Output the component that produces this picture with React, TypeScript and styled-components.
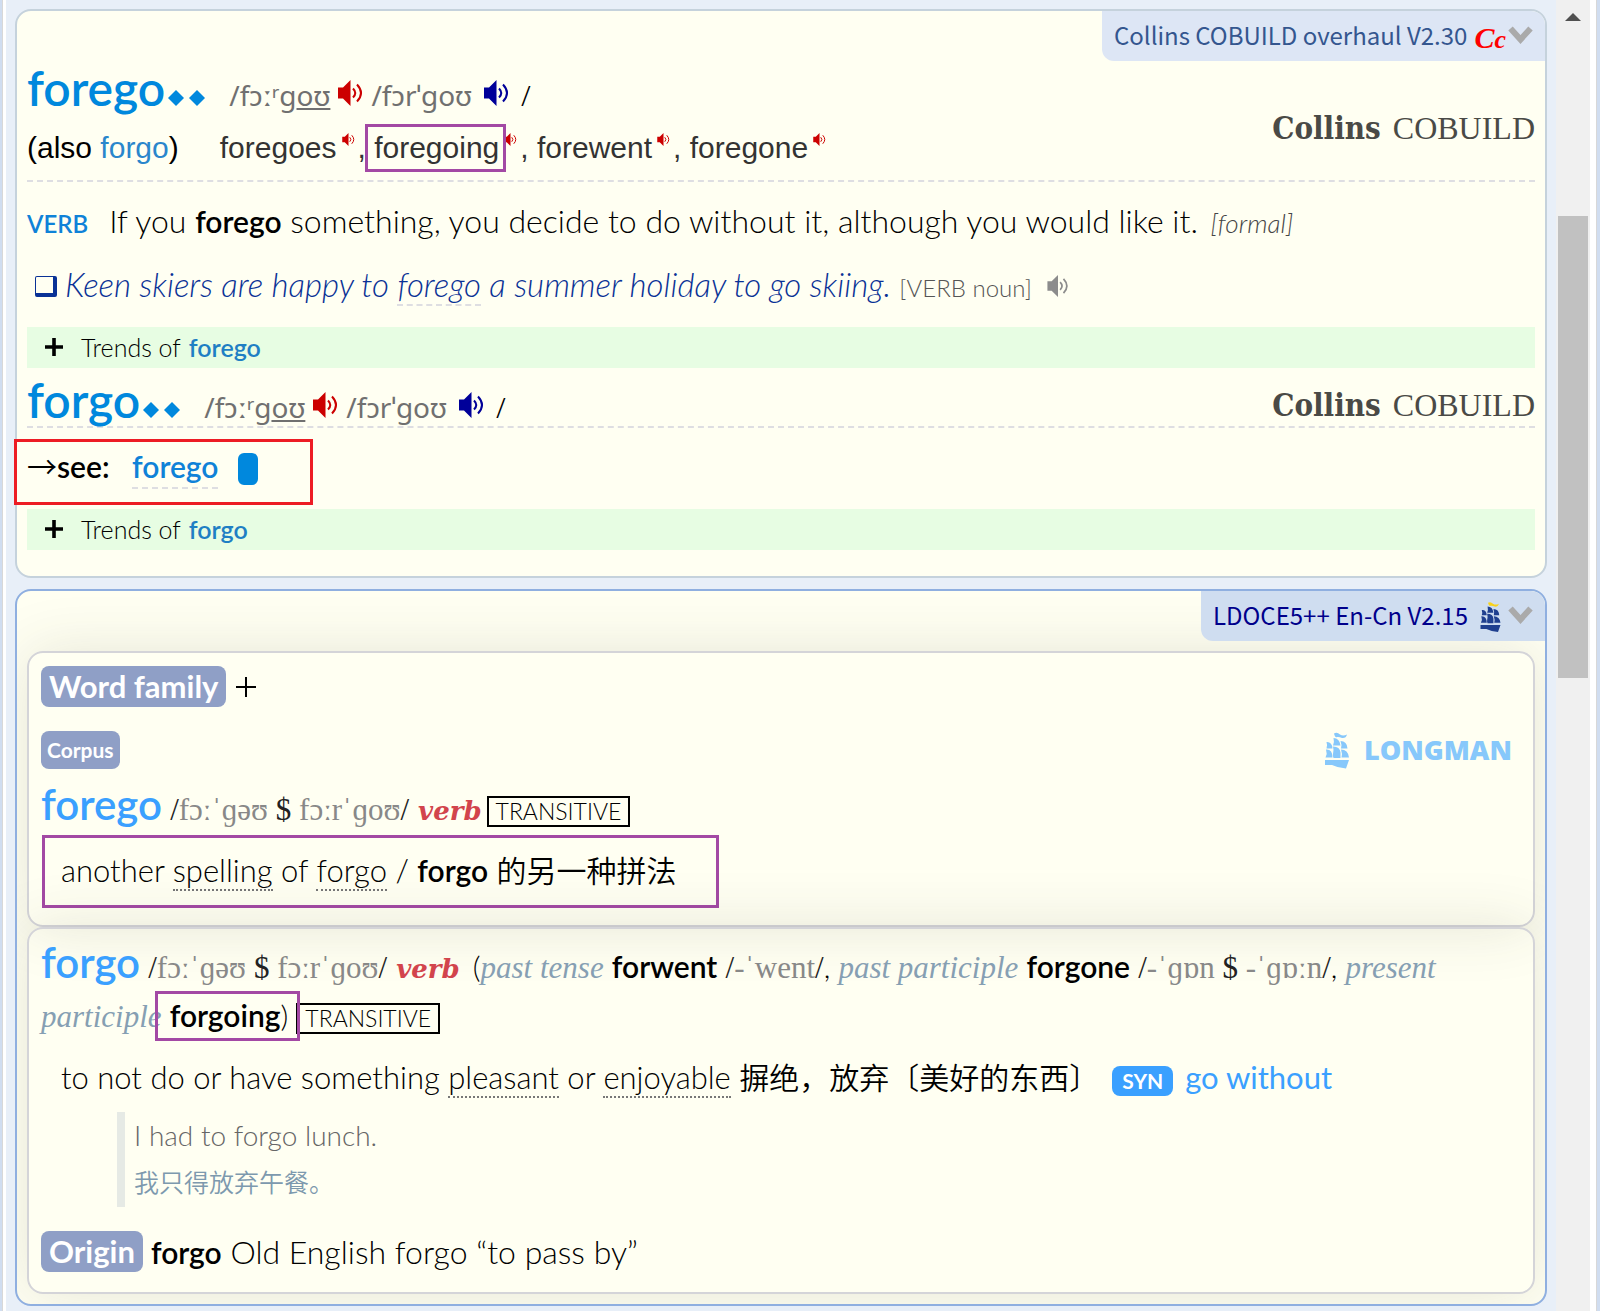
import React from "react";
import styled, { createGlobalStyle } from "styled-components";

const sans = `Lato, "Noto Sans CJK SC", sans-serif`;
const ipa = `"Noto Sans", "DejaVu Sans", sans-serif`;
const serif = `"Liberation Serif", "DejaVu Serif", serif`;
const cjk = `"Noto Sans CJK SC", sans-serif`;

const Global = createGlobalStyle`
  *, *::before, *::after { box-sizing: border-box; }
  body { margin: 0; background: #e8eff8; color: #000; font-family: ${sans}; font-size: 32px; font-weight: 300; }
  button { border: 0; padding: 0; margin: 0; background: none; font: inherit; color: inherit; cursor: pointer; }
  a { color: inherit; text-decoration: none; }
`;

const Page = styled.div`
  display: flex;
  min-height: 100vh;
`;
const LeftRail = styled.div`
  width: 6px;
  background: #fff;
  border-left: 2px solid #d0ddf0;
  box-shadow: inset 1px 0 #d8d8d8;
`;
const Main = styled.main`
  flex: 1;
  min-width: 0;
  display: flex;
  flex-direction: column;
  gap: 11px;
  padding: 9px 9px 5px;
`;
const ScrollTrack = styled.div`
  width: 34px;
  background: #f0f0f0;
  display: flex;
  flex-direction: column;
  align-items: center;
`;
const ScrollUp = styled.button`
  width: 34px;
  height: 34px;
  display: grid;
  place-items: center;
`;
const Thumb = styled.div`
  width: 30px;
  height: 462px;
  margin-top: 182px;
  background: #c1c1c1;
`;
const RightRail = styled.div`
  width: 10px;
  background: #fff;
  border-right: 3px solid #d0ddf0;
  box-shadow: inset -1px 0 #d8d8d8;
`;

const Card = styled.section<{ $line: string; $clip?: boolean }>`
  border: 2px solid ${(p) => p.$line};
  border-radius: 16px;
  background: #fffff2;
  padding: 0 10px 10px;
  overflow: ${(p) => (p.$clip ? "hidden" : "visible")};
`;
const Tab = styled.button<{ $bg: string; $ink: string }>`
  position: relative;
  z-index: 1;
  display: flex;
  align-items: center;
  height: 50px;
  margin: 0 -10px 0 auto;
  padding: 0 12px 3px;
  border-radius: 0 14px 0 12px;
  background: ${(p) => p.$bg};
  color: ${(p) => p.$ink};
  font-family: ${cjk};
  font-size: 24px;
  font-weight: 400;
`;
const CcMark = styled.span`
  margin-left: 7px;
  padding-top: 6px;
  color: #f00;
  font: italic bold 30px/1 ${serif};
  small { font-size: 26px; }
`;
const TabIcon = styled.span`
  display: flex;
  margin-left: 12px;
  padding-top: 4px;
`;
const ChevronBox = styled.span<{ $gap: number }>`
  display: flex;
  margin-left: ${(p) => p.$gap}px;
`;

const HeadBlock = styled.header`
  display: flex;
  justify-content: space-between;
  align-items: center;
  border-bottom: 2px dashed #dedee2;
`;
const HeadLine = styled.div<{ $low: boolean }>`
  height: 58px;
  line-height: ${(p) => (p.$low ? 76 : 65)}px;
  white-space: nowrap;
  & > * { line-height: 1; }
`;
const Forms = styled.div`
  height: 61px;
  line-height: 58px;
  font-family: "Liberation Sans", Arial, sans-serif;
  font-size: 30px;
  font-weight: 400;
  color: #333;
  white-space: nowrap;
`;
const Also = styled.span`
  margin-right: 41px;
  color: #000;
  a { color: #2a86cc; }
`;
const Word = styled.h2<{ $ink: string; $size: number }>`
  display: inline;
  margin: 0;
  font-size: ${(p) => p.$size}px;
  font-weight: 600;
  color: ${(p) => p.$ink};
`;
const Stars = styled.span`
  display: inline-flex;
  gap: 5px;
  margin: 0 24px 0 3px;
`;
const Ipa = styled.span`
  font-family: ${ipa};
  font-size: 28px;
  font-weight: 400;
  color: #707070;
`;
const Slash = styled.span`
  font-size: 28px;
  font-family: ${ipa};
`;
const Sound = styled.button<{ $ink: string; $gap: number }>`
  display: inline-block;
  margin: 0 ${(p) => p.$gap}px;
  color: ${(p) => p.$ink};
  svg { display: block; }
`;
const FormSound = styled(Sound)`
  margin: 0 3px 0 5px;
  vertical-align: 12px;
`;
const CollinsLogo = styled.div`
  display: flex;
  align-items: baseline;
  gap: 12px;
  padding-top: 15px;
  color: #4a4a46;
  font: 32px/40px ${serif};
  b { font: bold 31px/40px "DejaVu Serif Condensed", "DejaVu Serif", serif; }
`;

const Marked = styled.span<{ $inset: string }>`
  position: relative;
  &::after {
    content: "";
    position: absolute;
    inset: ${(p) => p.$inset};
    border: 3px solid #a349a4;
    pointer-events: none;
  }
`;

const Line = styled.p<{ $top: number }>`
  margin: ${(p) => p.$top}px 0 0;
  height: 40px;
  line-height: 37px;
  white-space: nowrap;
  & > * { line-height: 1; }
`;
const Pos = styled.span`
  margin-right: 21px;
  font-size: 24px;
  font-weight: 600;
  color: #0f82d8;
`;
const Register = styled.i`
  margin-left: 4px;
  font-size: 26px;
  color: #444;
`;
const Example = styled(Line)`
  padding-left: 8px;
  font-size: 33px;
  font-style: italic;
  color: #0a3296;
  a { padding-bottom: 0; }
`;
const Box = styled.span`
  display: inline-block;
  width: 22px;
  height: 21px;
  margin-right: 8px;
  border: 2px solid #0a3296;
  border-width: 1px 4px 4px 1px;
  border-radius: 2px;
`;
const DashLink = styled.a`
  padding-bottom: 3px;
  border-bottom: 2px dashed #dedee2;
`;
const Grammar = styled.span`
  margin: 0 15px 0 0;
  font-size: 24px;
  font-style: normal;
  color: #555;
`;
const Trends = styled.button`
  display: flex;
  align-items: center;
  width: 100%;
  height: 41px;
  margin-top: 21px;
  padding: 0 0 2px 18px;
  background: #e7fde3;
  font-size: 25px;
  text-align: left;
  svg { margin-right: 18px; }
  b { margin-left: 8px; color: #1f7fc4; font-weight: 600; }
`;
const See = styled(Line)`
  position: relative;
  font-size: 30px;
  font-weight: 600;
  &::after {
    content: "";
    position: absolute;
    left: -13px;
    top: -9px;
    width: 299px;
    height: 66px;
    border: 3px solid #ed1c24;
    pointer-events: none;
  }
  a { margin-left: 15px; color: #0f82d8; }
`;
const Arrow = styled.span`
  font-family: ${cjk};
  font-weight: 350;
`;
const Chip = styled.span`
  display: inline-block;
  width: 20px;
  height: 32px;
  margin-left: 20px;
  border-radius: 6px;
  background: #0088dd;
  vertical-align: -7px;
`;
const Pad = styled.div`
  height: 16px;
`;

const Entry = styled.article`
  border: 2px solid #d4d4d8;
  border-radius: 16px;
  padding: 9px 12px 17px 12px;
  box-shadow: 0 0 60px rgba(60, 60, 50, 0.13);
  &:last-child { padding-bottom: 20px; }
`;
const Entries = styled.div`
  display: grid;
  margin-top: 10px;
`;
const Row = styled.div<{ $top: number }>`
  display: flex;
  align-items: center;
  margin-top: ${(p) => p.$top}px;
`;
const Badge = styled.span<{ $small?: boolean }>`
  height: ${(p) => (p.$small ? 38 : 41)}px;
  padding: 0 ${(p) => (p.$small ? 6 : 8)}px;
  border-radius: 8px;
  background: #8f9fc6;
  color: #fff;
  font-size: ${(p) => (p.$small ? 21 : 31)}px;
  line-height: ${(p) => (p.$small ? 37 : 40)}px;
  font-weight: 700;
`;
const Expand = styled.button`
  display: flex;
  margin-left: 10px;
`;
const Longman = styled.div`
  display: flex;
  align-items: center;
  gap: 15px;
  margin: 0 9px 0 auto;
  color: #87c8fb;
  font: 800 27px/38px "Open Sans", sans-serif;
`;
const LHead = styled.div<{ $top: number }>`
  margin-top: ${(p) => p.$top}px;
  font-size: 30px;
  line-height: 49px;
  & > * { line-height: 1; }
`;
const Pron = styled.span`
  font-family: ${serif};
  font-size: 31px;
  color: #888;
  b { font-weight: 400; color: #222; }
`;
const Verb = styled.i`
  margin: 0 5px 0 9px;
  font-family: "DejaVu Serif", ${serif};
  font-size: 26px;
  font-weight: 700;
  color: #d2444c;
`;
const Label = styled.i`
  font-family: ${serif};
  font-size: 31px;
  color: #869fb3;
`;
const Strong = styled.b`
  font-size: 30px;
  font-weight: 600;
`;
const Gram = styled.span`
  display: inline-block;
  padding: 2px 7px;
  border: 2px solid #000;
  font-size: 23px;
`;
const BoxedDef = styled.div`
  width: fit-content;
  height: 73px;
  margin: 2px 0 0 1px;
  padding: 0 40px 0 16px;
  border: 3px solid #a349a4;
  font-size: 31px;
  line-height: 64px;
  & > * { line-height: 1; }
`;
const Def = styled(Line)`
  padding-left: 20px;
  font-size: 31px;
`;
const Dotted = styled.a`
  border-bottom: 2px dotted #777;
`;
const Zh = styled.span`
  font-family: ${cjk};
  font-size: 30px;
  font-weight: 350;
`;
const Syn = styled.span`
  display: inline-block;
  height: 30px;
  margin: 0 12px 0 13px;
  padding: 0 10px;
  border-radius: 8px;
  background: #3aa0ff;
  color: #fff;
  font-size: 21px;
  font-weight: 700;
  && { line-height: 29px; }
`;
const SynLink = styled.a`
  color: #3aa0ff;
  font-weight: 400;
`;
const Quote = styled.blockquote`
  margin: 13px 0 0 76px;
  padding-left: 9px;
  border-left: 8px solid #e6eae5;
  font-size: 28px;
  line-height: 47px;
  color: #666;
  height: 95px;
  div + div { font: 350 25px/44px ${cjk}; color: #7d99ae; }
`;
const OriginText = styled.span`
  margin-left: 8px;
  line-height: 38px;
`;

const Speaker = ({ w, h }: { w: number; h: number }) => (
  <svg width={w} height={h} viewBox="0 0 25 26" fill="none" aria-hidden="true">
    <path d="M0 7.500h5L12.500 0v26L5 18.500H0z" fill="currentColor" />
    <path d="M15 8.500q4.500 4.500 0 9M19 4.500q8 8.500 0 17" stroke="currentColor" strokeWidth="2" />
  </svg>
);
const Chevron = () => (
  <svg width="25" height="18" viewBox="0 0 25 18" aria-hidden="true">
    <path d="M2.500 2.500 12.500 13.500 22.500 2.500" fill="none" stroke="#aaa" strokeWidth="6" />
  </svg>
);
const Diamond = () => (
  <svg width="16" height="16" viewBox="0 0 16 16" aria-hidden="true">
    <path d="M8 0l8 8-8 8-8-8z" fill="#0088dd" />
  </svg>
);
const Ship = ({ w, h, flag, hull }: { w: number; h: number; flag: string; hull: string }) => (
  <svg width={w} height={h} viewBox="0 0 24 36" aria-hidden="true">
    <path d="M9 1q3-2 6 1 3 2 7 0-1 4-5 3.500-3-1.500-5-1-2 1-3-3.500z" fill={flag} />
    <g fill={hull}>
      <path d="M8.500 5.500q6 0 7 7.500H8q1.500-4 .5-7.500z" />
      <path d="M1.500 9.500q5.500-.5 6 6.500h-6q1.200-3 0-6.500zM15.500 8.500q6.500 0 7 7.500h-6.500q1-4-.5-7.500z" />
      <path d="M8 14q7 0 7.500 6v5.500H8.500q-1-2-.5-4 1-4 0-7.500z" />
      <path d="M1 17q6.500-.5 6.500 8H.5q2-4 .5-8zM16 17q7 0 8 8h-7.500q1-4-.5-8z" />
      <path d="M0 27.500h24l-3 8.500q-8-.5-14-3.500H0z" />
    </g>
  </svg>
);
const Plus = ({ size, weight }: { size: number; weight: number }) => (
  <svg width={size} height={size} viewBox="0 0 20 20" aria-hidden="true">
    <path d="M10 0v20M0 10h20" stroke="#000" strokeWidth={weight} />
  </svg>
);

const CobuildHead = ({ word, forms }: { word: string; forms?: React.ReactNode }) => (
  <HeadBlock>
    <div>
      <HeadLine $low={!forms}>
        <Word $ink="#0088dd" $size={48}>{word}</Word>
        <Stars><Diamond /><Diamond /></Stars>
        <Ipa>/fɔːʳg<u>oʊ</u></Ipa>
        <Sound $ink="#cc0000" $gap={8} aria-label="British pronunciation"><Speaker w={25} h={26} /></Sound>
        <Ipa>/fɔrˈgoʊ</Ipa>
        <Sound $ink="#000099" $gap={12} aria-label="American pronunciation"><Speaker w={25} h={26} /></Sound>
        <Slash>/</Slash>
      </HeadLine>
      {forms}
    </div>
    <CollinsLogo><b>Collins</b>COBUILD</CollinsLogo>
  </HeadBlock>
);
const SmallSound = () => (
  <FormSound $ink="#cc0000" $gap={0} aria-label="Play"><Speaker w={13} h={13} /></FormSound>
);
const Pronunciation = () => (
  <Pron><b>/</b>fɔːˈɡəʊ <b>$</b> fɔːrˈɡoʊ<b>/</b></Pron>
);

export default function App() {
  return (
    <>
      <Global />
      <Page>
        <LeftRail />
        <Main>
          <Card $line="#c5d2dc">
            <Tab $bg="#dde6f5" $ink="#34568f">
              Collins COBUILD overhaul V2.30
              <CcMark>C<small>c</small></CcMark>
              <ChevronBox $gap={2}><Chevron /></ChevronBox>
            </Tab>
            <CobuildHead
              word="forego"
              forms={
                <Forms>
                  <Also>(also <a href="#forgo">forgo</a>)</Also>
                  foregoes<SmallSound />, <Marked $inset="-7px -7px -8px -9px">foregoing</Marked><SmallSound />, forewent
                  <SmallSound />, foregone<SmallSound />
                </Forms>
              }
            />
            <Line $top={20}>
              <Pos>VERB</Pos>If you <Strong>forego</Strong> something, you decide to do without it, although you would like it.{" "}
              <Register>[formal]</Register>
            </Line>
            <Example $top={24}>
              <Box />Keen skiers are happy to <DashLink href="#forego">forego</DashLink> a summer holiday to go skiing.{" "}
              <Grammar>[VERB noun]</Grammar>
              <Sound $ink="#8c8c8c" $gap={0} aria-label="Play example"><Speaker w={22} h={22} /></Sound>
            </Example>
            <Trends><Plus size={18} weight={4} />Trends of <b>forego</b></Trends>
            <CobuildHead word="forgo" />
            <See $top={20}>
              <Arrow>→</Arrow>see: <DashLink href="#forego">forego</DashLink><Chip />
            </See>
            <Trends><Plus size={18} weight={4} />Trends of <b>forgo</b></Trends>
            <Pad />
          </Card>

          <Card $line="#8fafe0" $clip>
            <Tab $bg="#cfddf0" $ink="#00008b">
              LDOCE5++ En-Cn V2.15
              <TabIcon><Ship w={21} h={30} flag="#f8d21c" hull="#1f3f8f" /></TabIcon>
              <ChevronBox $gap={7}><Chevron /></ChevronBox>
            </Tab>
            <Entries>
              <Entry>
                <Row $top={4}>
                  <Badge>Word family</Badge>
                  <Expand aria-label="Expand word family"><Plus size={20} weight={2} /></Expand>
                </Row>
                <Row $top={24}>
                  <Badge $small>Corpus</Badge>
                  <Longman><Ship w={24} h={37} flag="#87c8fb" hull="#87c8fb" />LONGMAN</Longman>
                </Row>
                <LHead $top={14}>
                  <Word $ink="#3aa0ff" $size={42}>forego</Word> <Pronunciation /><Verb>verb</Verb><Gram>TRANSITIVE</Gram>
                </LHead>
                <BoxedDef>
                  another <Dotted href="#spelling">spelling</Dotted> of <Dotted href="#forgo">forgo</Dotted> / <Strong>forgo</Strong>{" "}
                  <Zh>的另一种拼法</Zh>
                </BoxedDef>
              </Entry>
              <Entry>
                <LHead $top={3}>
                  <Word $ink="#3aa0ff" $size={42}>forgo</Word> <Pronunciation /><Verb>verb</Verb> (<Label>past tense</Label>{" "}
                  <Strong>forwent</Strong> <Pron><b>/</b>-ˈwent<b>/</b></Pron>, <Label>past participle</Label> <Strong>forgone</Strong>{" "}
                  <Pron><b>/</b>-ˈɡɒn <b>$</b> -ˈɡɒːn<b>/</b></Pron>, <Label>present</Label> <Label>participle</Label>{" "}
                  <Marked $inset="-6px -12px -8px -15px"><Strong>forgoing</Strong>)</Marked> <Gram>TRANSITIVE</Gram>
                </LHead>
                <Def $top={19}>
                  to not do or have something <Dotted href="#pleasant">pleasant</Dotted> or <Dotted href="#enjoyable">enjoyable</Dotted>{" "}
                  <Zh>摒绝，放弃〔美好的东西〕</Zh><Syn>SYN</Syn><SynLink href="#go-without">go without</SynLink>
                </Def>
                <Quote>
                  <div>I had to forgo lunch.</div>
                  <div>我只得放弃午餐。</div>
                </Quote>
                <Row $top={24}>
                  <Badge>Origin</Badge>
                  <OriginText><Strong>forgo</Strong> Old English forgo “to pass by”</OriginText>
                </Row>
              </Entry>
            </Entries>
          </Card>
        </Main>
        <ScrollTrack>
          <ScrollUp aria-label="Scroll up">
            <svg width="16" height="8" viewBox="0 0 16 8" aria-hidden="true"><path d="M0 8 8 0l8 8z" fill="#505050" /></svg>
          </ScrollUp>
          <Thumb />
        </ScrollTrack>
        <RightRail />
      </Page>
    </>
  );
}
